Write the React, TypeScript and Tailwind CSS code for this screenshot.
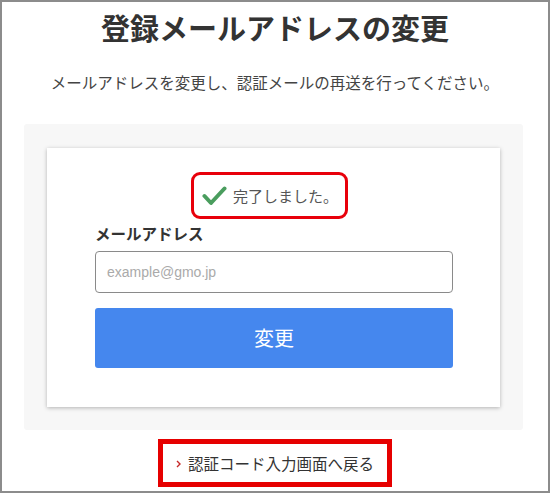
export default function App() {
  return (
    <div
      className="box-border h-[493px] w-[550px] border-2 border-[#8c8c8c] bg-white text-[#333]"
      style={{ fontFamily: '"Noto Sans CJK JP", "Noto Sans", sans-serif' }}
    >
      <h1 className="pt-[5px] text-center text-[29px] font-bold leading-[40px] text-[#333]">
        登録メールアドレスの変更
      </h1>
      <p className="mt-[23px] text-center text-[15.5px] leading-[24px] text-[#444]">
        メールアドレスを変更し、認証メールの再送を行ってください。
      </p>

      <div className="ml-[22px] mt-[30px] w-[499px] rounded-[3px] bg-[#f7f7f7] px-[23px] pb-[23px] pt-[24px]">
        <div className="flex flex-col bg-white pb-[39px] pl-[48px] pr-[47px] pt-[24px] shadow-[0_1px_4px_rgba(0,0,0,0.28)]">
          <div className="flex justify-center pr-[10px]">
            <div className="box-border flex h-[47px] w-[157px] items-center justify-center gap-[6px] rounded-[9px] border-[3px] border-[#e8000b] pl-[2px]">
              <svg width="25" height="20" viewBox="0 0 25 20" className="shrink-0">
                <polyline
                  points="2.5,10 9,17 22.5,2.5"
                  fill="none"
                  stroke="#4a9d5e"
                  strokeWidth="4"
                  strokeLinecap="round"
                  strokeLinejoin="round"
                />
              </svg>
              <span className="text-[15px] leading-[20px] text-[#555]">完了しました。</span>
            </div>
          </div>

          <label className="mt-[3px] text-[15.5px] font-bold leading-[22px] text-[#333]">メールアドレス</label>
          <input
            type="text"
            placeholder="example@gmo.jp"
            className="mt-[7px] box-border h-[42px] w-full rounded-[4px] border border-[#8a8a8a] px-[11px] text-[14px] text-[#333] placeholder:text-[#aaa] outline-none"
            style={{ fontFamily: '"Liberation Sans", Arial, sans-serif' }}
          />
          <button className="mt-[15px] h-[60px] w-full rounded-[3px] bg-[#4587ee] text-[20px] text-white">
            変更
          </button>
        </div>
      </div>

      <div className="mt-[9px] flex justify-center">
        <a className="box-border flex h-[48px] w-[234px] items-center justify-center gap-[7px] border-[5px] border-[#e60000] text-[15.5px] leading-[22px] text-[#333]">
          <svg width="5" height="8" viewBox="0 0 5 8" className="mt-[2px] shrink-0">
            <polyline points="1,1 4,4 1,7" fill="none" stroke="#c62828" strokeWidth="1.4" />
          </svg>
          <span>認証コード入力画面へ戻る</span>
        </a>
      </div>
    </div>
  );
}
